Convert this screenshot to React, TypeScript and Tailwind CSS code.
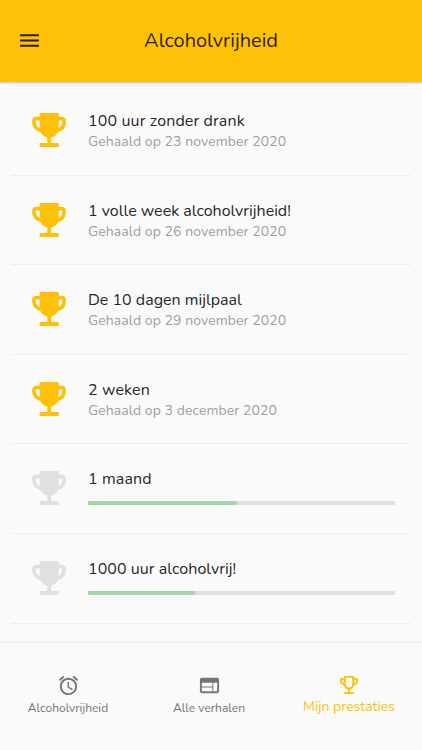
import React from 'react';
import { MdAlarm, MdMenu, MdWeb } from 'react-icons/md';
import clsx from 'clsx';

type Achievement = {
  title: string;
  achievedOn?: string;
  progress?: number;
  className?: string;
};

const achievements: Achievement[] = [
  { title: '100 uur zonder drank', achievedOn: '23 november 2020', className: 'tracking-[0.13px]' },
  { title: '1 volle week alcoholvrijheid!', achievedOn: '26 november 2020' },
  { title: 'De 10 dagen mijlpaal', achievedOn: '29 november 2020' },
  { title: '2 weken', achievedOn: '3 december 2020', className: 'tracking-[0.13px]' },
  { title: '1 maand', progress: 48.5, className: 'tracking-[0.13px]' },
  { title: '1000 uur alcoholvrij!', progress: 34.8, className: 'tracking-[0.05px]' },
];

function Trophy({ className }: { className?: string }) {
  return (
    <svg viewBox="0 0 34 34" className={className} fill="currentColor">
      <path d="M7.7 0h19v15.5c0 5-4 9.2-9.5 9.2s-9.5-4.2-9.5-9.2z" />
      <path
        d="M9 5.6H4.6Q1.9 5.6 1.9 8.5C1.9 13 4.5 16.8 9.5 17.3M25.4 5.6h4.4Q32.1 5.6 32.1 8.5C32.1 13 29.9 16.8 24.9 17.3"
        fill="none"
        stroke="currentColor"
        strokeWidth="3.7"
      />
      <path d="M15.3 23h3.8v7h7.6v4h-19v-4h7.6z" />
    </svg>
  );
}

function TrophyOutline({ className }: { className?: string }) {
  return (
    <svg
      viewBox="0 0 20 20"
      className={className}
      fill="none"
      stroke="currentColor"
      strokeWidth="1.9"
      strokeLinejoin="round"
      strokeLinecap="round"
    >
      <path d="M5.7 1.9h8.6V9c0 2.7-1.9 4.5-4.3 4.500S5.7 11.700 5.7 9z" />
      <path d="M5.7 3.9H2.6q-.9 0-.9.9c0 2.7 1.600 4.500 4.300 4.900M14.300 3.900h3.100q.9 0 .9.9c0 2.700-1.600 4.500-4.300 4.900" />
      <path d="M10 13.6v4.500M5.700 18.100h8.600" />
    </svg>
  );
}

function AchievementRow({ item }: { item: Achievement }) {
  const achieved = item.achievedOn !== undefined;
  return (
    <li className="flex h-[89.6px] border-b border-[#eeeeee] pl-[21px] pr-4">
      <Trophy className={clsx('mt-[27px] size-[34px] shrink-0', achieved ? 'text-[#ffc107]' : 'text-[#e0e0e0]')} />
      <div className="ml-[22px] mt-6 flex-1">
        <h2 className={clsx('text-base leading-[22px] whitespace-nowrap text-[#282828]', item.className)}>
          {item.title}
        </h2>
        {achieved ? (
          <p className="text-[14px] leading-[20px] tracking-[0.07px] whitespace-nowrap text-[#9e9e9e]">
            Gehaald op {item.achievedOn}
          </p>
        ) : (
          <div className="mt-[11px] h-1 bg-[#e0e0e0]">
            <div className="h-full bg-[#a5d6a7]" style={{ width: `${item.progress}%` }} />
          </div>
        )}
      </div>
    </li>
  );
}

export default function App() {
  return (
    <div className="flex h-[750px] w-[422px] flex-col overflow-hidden bg-[#fafafa] font-['Nunito','Lato',sans-serif]">
      <header className="z-10 flex h-[82px] shrink-0 items-center bg-[#ffc107] px-[17px] text-black/85 shadow-[0_1px_2px_rgba(0,0,0,0.25)]">
        <MdMenu size={25} className="mb-px" />
        <h1 className="flex-1 pr-[25px] text-center text-[20px]">Alcoholvrijheid</h1>
      </header>

      <main className="flex-1 px-[11px] pt-[3px]">
        <ul className="border-t border-[#eeeeee]">
          {achievements.map((item) => (
            <AchievementRow key={item.title} item={item} />
          ))}
        </ul>
      </main>

      <nav className="flex h-[109px] shrink-0 border-t-2 border-[#f2f2f2] text-[#757575]">
        <a className="flex w-[136px] flex-col items-center pt-[31px]">
          <MdAlarm size={23} />
          <span className="mt-0.5 text-[12px] leading-[18px]">Alcoholvrijheid</span>
        </a>
        <a className="flex w-[146px] flex-col items-center pt-[31px]">
          <MdWeb size={23} />
          <span className="mt-0.5 text-[12px] leading-[18px]">Alle verhalen</span>
        </a>
        <a className="flex w-[134px] flex-col items-center pt-8 text-[#ffc107]">
          <TrophyOutline className="size-5" />
          <span className="mt-0.5 text-[14px] leading-5">Mijn prestaties</span>
        </a>
      </nav>
    </div>
  );
}
